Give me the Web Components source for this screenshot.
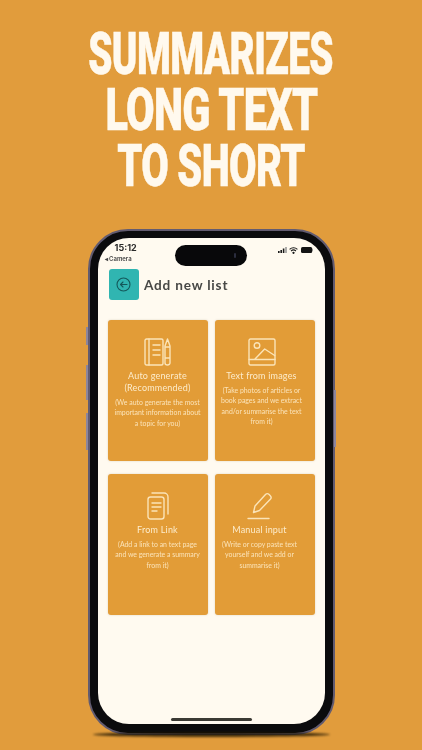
<!DOCTYPE html>
<html lang="en">
<head>
<meta charset="utf-8">
<title>Summarizes long text to short</title>
<style>
    html, body { margin: 0; height: 100%; }
    body { background: #e19c3c; overflow: hidden; }
</style>
</head>
<body>
<promo-page>
    <promo-heading>
        <span>SUMMARIZES</span>
        <span>LONG TEXT</span>
        <span>TO SHORT</span>
    </promo-heading>
    <phone-frame>
        <status-bar time="15:12" back="Camera"></status-bar>
        <screen-header>Add new list</screen-header>
        <option-grid>
            <option-card>
                <svg slot="icon" width="28" height="28" viewBox="0 0 28 28" fill="none" stroke="#fbe4b8" stroke-width="1.4" stroke-linejoin="round" stroke-linecap="round">
                    <rect x="1" y="1" width="18" height="26" rx="1.5"/>
                    <path d="M5 1v26M9 7h7M9 12h7M9 17h7"/>
                    <path d="M21 8 23.5 1 26 8v17a2.5 2 0 0 1-5 0zM21 9h5M21 20h5"/>
                </svg>
                <span slot="title">Auto generate<br>(Recommended)</span>
                (We auto generate the most<br>important information about<br>a topic for you)
            </option-card>
            <option-card style="--shift: 6px">
                <svg slot="icon" width="28" height="28" viewBox="0 0 28 28" fill="none" stroke="#fbe4b8" stroke-width="1.4" stroke-linejoin="round" stroke-linecap="round">
                    <rect x="1" y="1" width="26" height="26" rx="1.5"/>
                    <path d="M1 21.5h26M7 21 16.7 11l10 6.5"/>
                    <circle cx="9" cy="7.5" r="2.8"/>
                </svg>
                <span slot="title">Text from images</span>
                (Take photos of articles or<br>book pages and we extract<br>and/or summarise the text<br>from it)
            </option-card>
            <option-card>
                <svg slot="icon" width="22" height="28" viewBox="0 0 22 28" fill="none" stroke="#fbe4b8" stroke-width="1.4" stroke-linejoin="round" stroke-linecap="round">
                    <rect x="1" y="5" width="16" height="22" rx="2.5"/>
                    <path d="M5 1h12a4 4 0 0 1 4 4v17"/>
                    <path d="M5 11h9M5 15h9M5 19h5"/>
                </svg>
                <span slot="title">From Link</span>
                (Add a link to an text page<br>and we generate a summary<br>from it)
            </option-card>
            <option-card style="--shift: 10px">
                <svg slot="icon" width="26" height="28" viewBox="0 0 26 28" fill="none" stroke="#fbe4b8" stroke-width="1.4" stroke-linejoin="round" stroke-linecap="round">
                    <path d="M8 14 18.5 2.5a2.6 2.6 0 0 1 3.6 0l1.2 1.2a2.6 2.6 0 0 1 0 3.6L12.5 18.5 6.5 20.5z"/>
                    <path d="M1 26.5h21"/>
                </svg>
                <span slot="title">Manual input</span>
                (Write or copy paste text<br>yourself and we add or<br>summarise it)
            </option-card>
        </option-grid>
    </phone-frame>
</promo-page>
<script>
// 页面外层
class PromoPage extends HTMLElement {
    constructor() {
        super();
        this.attachShadow({ mode: 'open' });
        this.shadowRoot.innerHTML = `
<style>
    :host {
        display: flex;
        flex-direction: column;
        align-items: center;
        width: 422px;
        height: 750px;
        overflow: hidden;
        background: #e19c3c;
    }
</style>
<slot></slot>`;
    }
}

class PromoHeading extends HTMLElement {
    constructor() {
        super();
        this.attachShadow({ mode: 'open' });
        this.shadowRoot.innerHTML = `
<style>
    :host {
        display: flex;
        flex-direction: column;
        align-items: center;
        padding-top: 26px;
        height: 203px;
        font: 900 60px/56px "Roboto", "Liberation Sans", sans-serif;
        letter-spacing: -1px;
        color: #fff9ee;
        -webkit-text-stroke: .5px #fff9ee;
        white-space: nowrap;
    }
    ::slotted(span) {
        display: block;
        transform: scaleX(.645);
        filter: blur(.3px);
    }
    ::slotted(span:nth-child(2)) { transform: scaleX(.69); }
    ::slotted(span:nth-child(3)) { transform: scaleX(.665); }
</style>
<slot></slot>`;
    }
}

class PhoneFrame extends HTMLElement {
    constructor() {
        super();
        this.attachShadow({ mode: 'open' });
        this.shadowRoot.innerHTML = `
<style>
    :host {
        display: block;
        position: relative;
        isolation: isolate;
        width: 247px;
        height: 506px;
        box-sizing: border-box;
        border: 2px solid #625b70;
        border-radius: 40px;
        background: #0b0b0d;
        padding: 7px 8px 9px;
    }
    .screen {
        position: relative;
        height: 100%;
        background: #fffaf0;
        border-radius: 31px;
        overflow: hidden;
        filter: blur(.35px);
    }
    .home {
        position: absolute;
        left: 73px;
        right: 73px;
        bottom: 3px;
        height: 3px;
        border-radius: 2px;
        background: #3b3a34;
    }
    .btn {
        position: absolute;
        width: 1.5px;
        background: #8c859c;
    }
    .btn.l1 { left: -3.5px; top: 96px; height: 18px; }
    .btn.l2 { left: -3.5px; top: 134px; height: 35px; }
    .btn.l3 { left: -3.5px; top: 182px; height: 37px; }
    .btn.r1 { right: -3px; top: 159px; height: 57px; }
    .shadow {
        position: absolute;
        left: 3px;
        right: 3px;
        bottom: -4px;
        height: 5px;
        border-radius: 50%;
        background: rgba(30, 20, 0, .8);
        filter: blur(.8px);
        z-index: -1;
    }
</style>
<span class="shadow"></span>
<span class="btn l1"></span><span class="btn l2"></span><span class="btn l3"></span><span class="btn r1"></span>
<div class="screen">
    <slot></slot>
    <div class="home"></div>
</div>`;
    }
}

class StatusBar extends HTMLElement {
    constructor() {
        super();
        this.attachShadow({ mode: 'open' });
        this.shadowRoot.innerHTML = `
<style>
    :host {
        display: flex;
        justify-content: space-between;
        height: 27px;
        padding: 4px 12px 0 7px;
        position: relative;
        font-family: "Inter", "Liberation Sans", sans-serif;
        color: #2a2a2a;
    }
    .left { display: flex; flex-direction: column; }
    .time { font-size: 9px; font-weight: 700; line-height: 11px; margin-left: 10px; }
    .back { font-size: 6px; font-weight: 600; line-height: 12px; color: #444; }
    .right { display: flex; align-items: center; gap: 2.5px; height: 10px; margin-top: 3px; }
    .island {
        position: absolute;
        left: 77px;
        top: 7px;
        width: 72px;
        height: 21px;
        border-radius: 11px;
        background: #08080a;
    }
    .island i {
        position: absolute;
        right: 11px;
        top: 8px;
        width: 2px;
        height: 5px;
        border-radius: 1px;
        background: #2b2d3e;
    }
</style>
<div class="left">
    <span class="time"></span>
    <span class="back"></span>
</div>
<div class="island"><i></i></div>
<div class="right">
    <svg width="9" height="6" viewBox="0 0 9 6" fill="#1a1a1a"><rect x="0" y="4" width="1.6" height="2"/><rect x="2.4" y="3" width="1.6" height="3"/><rect x="4.8" y="1.5" width="1.6" height="4.5"/><rect x="7.2" y="0" width="1.6" height="6" fill="#999"/></svg>
    <svg width="9" height="7" viewBox="0 0 9 7" fill="none" stroke="#1a1a1a" stroke-width="1.1"><path d="M.6 2.4a5.6 5.6 0 0 1 7.8 0M2.1 4a3.4 3.4 0 0 1 4.8 0"/><circle cx="4.5" cy="5.8" r=".6" fill="#1a1a1a"/></svg>
    <svg width="12" height="6" viewBox="0 0 12 6"><rect width="11.2" height="6" rx="1.6" fill="#141414"/><rect x="11.3" y="2" width=".7" height="2" fill="#777"/></svg>
</div>`;
    }

    connectedCallback() {
        this.shadowRoot.querySelector('.time').textContent = this.getAttribute('time');
        this.shadowRoot.querySelector('.back').textContent = '\u25C2 ' + this.getAttribute('back');
    }
}

class ScreenHeader extends HTMLElement {
    constructor() {
        super();
        this.attachShadow({ mode: 'open' });
        this.shadowRoot.innerHTML = `
<style>
    :host {
        display: flex;
        align-items: center;
        gap: 5.5px;
        padding-left: 11px;
        height: 31px;
    }
    button {
        display: flex;
        align-items: center;
        justify-content: center;
        width: 30px;
        height: 31px;
        padding: 0;
        border: 0;
        border-radius: 3px;
        background: #30b5b1;
    }
    h1 {
        margin: 0;
        font: 700 13.6px "Lato", "Liberation Sans", sans-serif;
        letter-spacing: .8px;
        color: #484846;
    }
</style>
<button aria-label="Back">
    <svg width="15" height="15" viewBox="0 0 15 15" fill="none" stroke="#14585a" stroke-width="1.1" stroke-linecap="round" stroke-linejoin="round">
        <circle cx="7.5" cy="7.5" r="6.5"/>
        <path d="M11 7.5H4.5M7 5 4.5 7.5 7 10"/>
    </svg>
</button>
<h1><slot></slot></h1>`;
    }
}

class OptionGrid extends HTMLElement {
    constructor() {
        super();
        this.attachShadow({ mode: 'open' });
        this.shadowRoot.innerHTML = `
<style>
    :host {
        display: grid;
        grid-template-columns: 100px 100px;
        grid-auto-rows: 141px;
        gap: 13px 7px;
        padding: 20px 0 0 10px;
    }
</style>
<slot></slot>`;
    }
}

class OptionCard extends HTMLElement {
    constructor() {
        super();
        this.attachShadow({ mode: 'open' });
        this.shadowRoot.innerHTML = `
<style>
    :host {
        display: flex;
        flex-direction: column;
        align-items: center;
        box-sizing: border-box;
        padding: 18px var(--shift, 0) 0 0;
        border-radius: 3px;
        background: #e29c37;
        box-shadow: 0 0 2px rgba(120, 90, 40, .25);
        text-align: center;
        white-space: nowrap;
        color: #fdeccb;
        font-family: "Lato", "Liberation Sans", sans-serif;
    }
    .icon { height: 28px; display: flex; }
    .title {
        margin-top: 4px;
        font-size: 9px;
        line-height: 12px;
        letter-spacing: .2px;
    }
    .desc {
        margin-top: 3px;
        font-size: 6.9px;
        line-height: 10.3px;
        color: #fbe3b8;
    }
</style>
<div class="icon"><slot name="icon"></slot></div>
<div class="title"><slot name="title"></slot></div>
<div class="desc"><slot></slot></div>`;
    }
}

customElements.define('promo-page', PromoPage);
customElements.define('promo-heading', PromoHeading);
customElements.define('phone-frame', PhoneFrame);
customElements.define('status-bar', StatusBar);
customElements.define('screen-header', ScreenHeader);
customElements.define('option-grid', OptionGrid);
customElements.define('option-card', OptionCard);
</script>
</body>
</html>
